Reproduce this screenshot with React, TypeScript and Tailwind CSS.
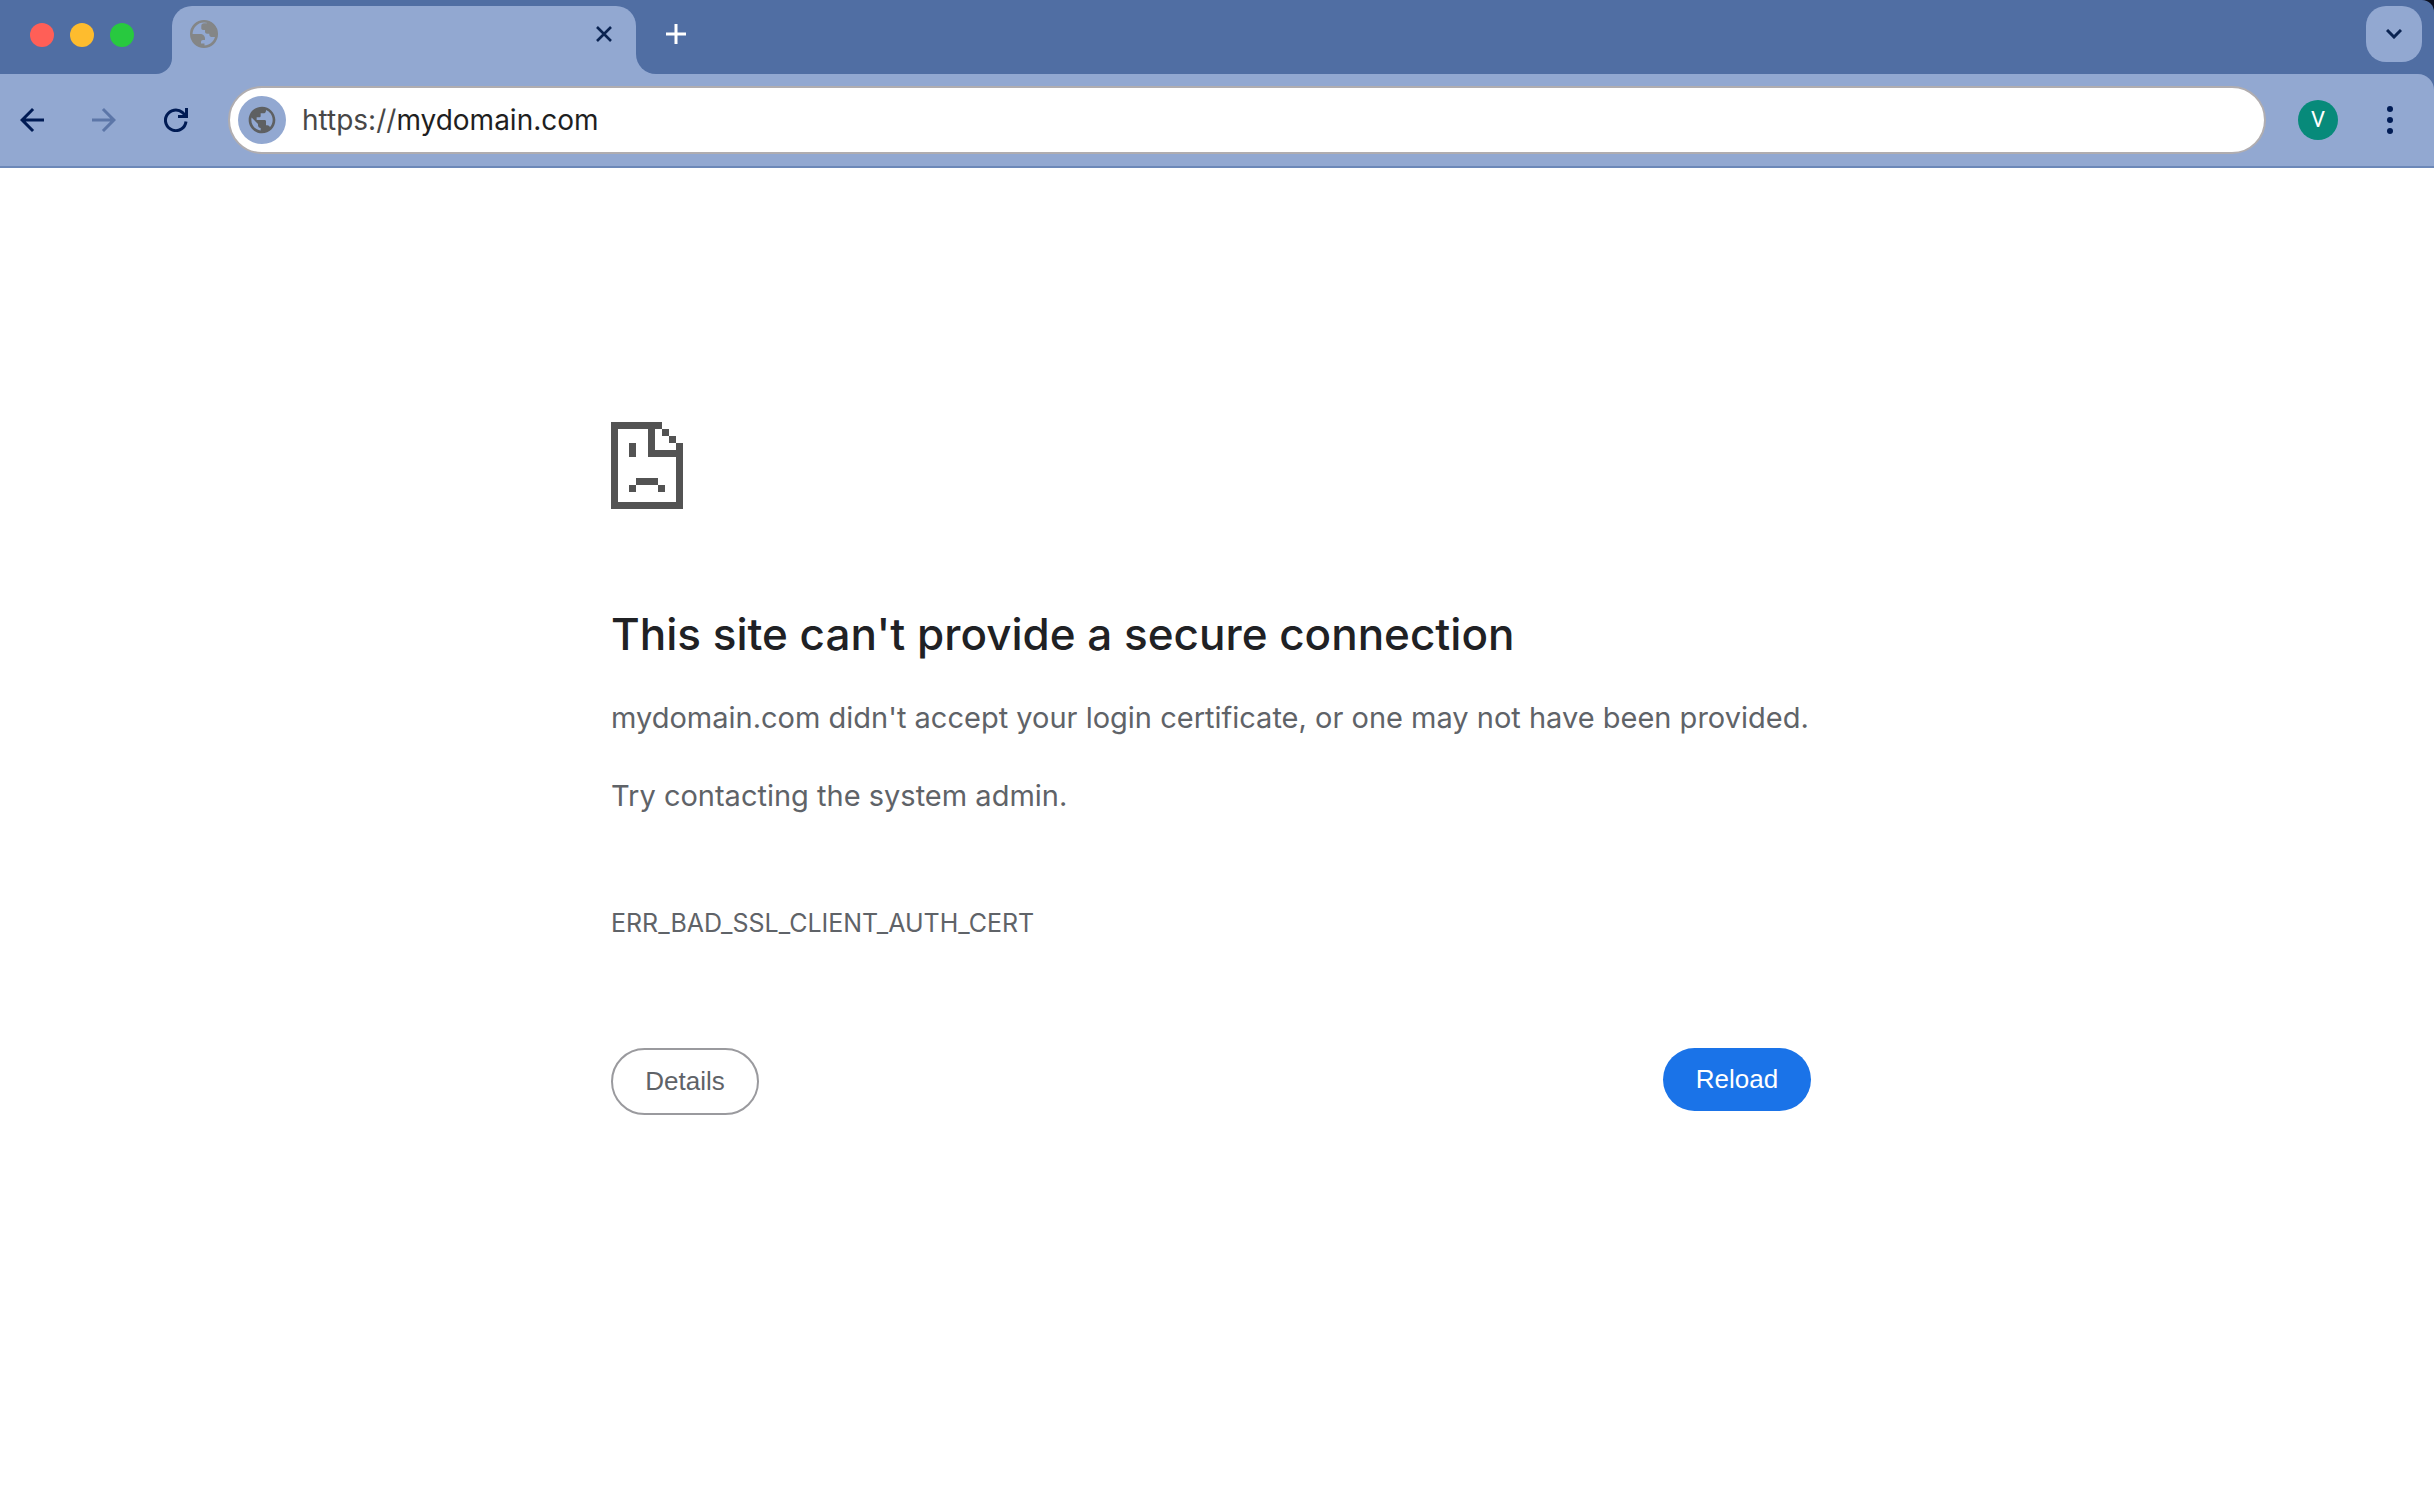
import type { ReactNode } from 'react';
import { MdArrowBack, MdArrowForward, MdPublic } from 'react-icons/md';

const trafficLights = [
  { label: 'Close window', color: 'bg-[#ff5f57]' },
  { label: 'Minimize window', color: 'bg-[#febc2e]' },
  { label: 'Zoom window', color: 'bg-[#28c93f]' },
];

interface IconButtonProps {
  label: string;
  children: ReactNode;
  className?: string;
  disabled?: boolean;
}

function IconButton({ label, children, className = '', disabled = false }: IconButtonProps) {
  return (
    <button
      type="button"
      aria-label={label}
      disabled={disabled}
      className={`flex shrink-0 items-center justify-center ${className}`}
    >
      {children}
    </button>
  );
}

// Default favicon for pages without one
function FaviconGlobe() {
  return (
    <svg viewBox="0 0 28 28" className="h-7 w-7" fill="#848687" aria-hidden="true">
      <circle cx="14" cy="14" r="12.7" fill="none" stroke="#848687" strokeWidth="2.6" />
      <path d="M1 14h9c3 0 5 2 5 4.500v1.500h-2c-1.200 0-2 .8-2 2v1.500h3.500V27C7 27 1 21 1 14z" />
      <path d="M17 1.500v1.800h-3c-1.600 0-2.700 1.100-2.700 2.600v2.300c0 1 .7 1.700 1.700 1.700h2v1.800c0 1.100.9 2 2 2h2.300v1.100c0 1.200.9 2.200 2.200 2.200H27C28.500 8 23 2 17 1.500z" />
    </svg>
  );
}

function TabStrip() {
  return (
    <div className="flex h-[74px] items-start rounded-tr-[12px] bg-[#506ea3]">
      <div className="flex h-[70px] w-[156px] shrink-0 items-center gap-4 pl-[30px]">
        {trafficLights.map((light) => (
          <button
            key={light.label}
            type="button"
            aria-label={light.label}
            className={`h-6 w-6 rounded-full ${light.color}`}
          />
        ))}
      </div>

      {/* Active tab with flared bottom corners */}
      <div className="flex items-end self-end">
        <div className="h-5 w-4 shrink-0 bg-[#92a8d1]">
          <div className="h-5 w-4 rounded-br-[20px] bg-[#506ea3]" />
        </div>
        <div className="flex h-[68px] w-[464px] items-center justify-between rounded-t-[20px] bg-[#92a8d1] pr-5 pb-3 pl-[18px]">
          <FaviconGlobe />
          <IconButton label="Close tab" className="h-6 w-6">
            <svg viewBox="0 0 16 16" className="h-4 w-4" fill="none" stroke="#0a2351" strokeWidth="2.6">
              <path d="M1 1l14 14M15 1L1 15" />
            </svg>
          </IconButton>
        </div>
        <div className="h-5 w-5 shrink-0 bg-[#92a8d1]">
          <div className="h-5 w-5 rounded-bl-[20px] bg-[#506ea3]" />
        </div>
      </div>

      <IconButton label="New tab" className="mt-[18px] ml-1 h-8 w-8">
        <svg viewBox="0 0 20 20" className="h-5 w-5" fill="none" stroke="white" strokeWidth="3">
          <path d="M10 0v20M0 10h20" />
        </svg>
      </IconButton>

      <IconButton label="Search tabs" className="mt-[6px] mr-3 ml-auto h-14 w-14 rounded-[20px] bg-[#92a8d1]">
        <svg viewBox="0 0 16 10" className="h-[10px] w-4" fill="none" stroke="#0a2351" strokeWidth="3">
          <path d="M1 1l7 7 7-7" />
        </svg>
      </IconButton>
    </div>
  );
}

function Toolbar() {
  return (
    <div className="bg-[#506ea3]">
      <div className="flex h-[94px] items-center rounded-tr-[16px] border-b-2 border-[#6c88b8] bg-[#92a8d1] pr-6">
        <nav aria-label="Navigation" className="flex items-center gap-10 pl-4">
          <IconButton label="Back" className="h-8 w-8 text-[#001b54]">
            <MdArrowBack className="h-9 w-9 shrink-0" />
          </IconButton>
          <IconButton label="Forward" className="h-8 w-8 text-[#5c76a8]" disabled>
            <MdArrowForward className="h-9 w-9 shrink-0" />
          </IconButton>
          <IconButton label="Reload page" className="h-8 w-8">
            <svg viewBox="0 0 24 24" className="h-6 w-6" fill="none" stroke="#001b54" strokeWidth="3">
              <path d="M22 13.500A10.300 10.300 0 1 1 18.500 4.500L22 8" />
              <path d="M22.500 0v8.500H14" />
            </svg>
          </IconButton>
        </nav>

        <div className="ml-9 flex h-[68px] flex-1 items-center rounded-full border-2 border-[#b0adb0] bg-white pl-2">
          <IconButton label="View site information" className="h-12 w-12 rounded-full bg-[#92a8d1]">
            <MdPublic className="h-8 w-8 text-[#5e6062]" />
          </IconButton>
          <div className="ml-4 font-['Inter',sans-serif] text-[28px] leading-9 text-[#1f1f1f]">
            <span className="text-[#474747]">https://</span>mydomain.com
          </div>
        </div>

        <button
          type="button"
          aria-label="Profile V"
          className="ml-8 h-10 w-10 rounded-full bg-[#078a7a] font-['Roboto',sans-serif] text-[22px] leading-10 text-white"
        >
          V
        </button>
        <IconButton label="Menu" className="ml-8 h-10 w-10">
          <svg viewBox="0 0 6 28" className="h-7 w-[6px]" fill="#001b54">
            <circle cx="3" cy="3" r="3" />
            <circle cx="3" cy="14" r="3" />
            <circle cx="3" cy="25" r="3" />
          </svg>
        </IconButton>
      </div>
    </div>
  );
}

function SadPageIcon() {
  return (
    <svg viewBox="0 0 72 87" className="h-[87px] w-[72px]" fill="#535353" shapeRendering="crispEdges" aria-hidden="true">
      <path d="M0 0h51v7H44v21h21v-7h7v66H0zM7 7v73h58V35H37V7z" fillRule="evenodd" />
      <path d="M51 7h7v7h-7zM58 14h7v7h-7zM18 21h7v14h-7zM25 56h22v7H25zM18 63h7v7h-7zM47 63h7v7h-7z" />
    </svg>
  );
}

export default function App() {
  return (
    <div className="min-h-screen bg-white">
      <header className="bg-[#0b1020]">
        <TabStrip />
        <Toolbar />
      </header>

      <div className="pr-3">
        <main className="mx-auto w-full max-w-[1200px] pt-[254px] font-['Inter',sans-serif] text-[#5f6368]">
          <SadPageIcon />
          <h1 className="mt-24 text-[44px] leading-[58px] font-medium text-[#202124]">
            This site can't provide a secure connection
          </h1>
          <p className="mt-8 text-[29px] leading-[46px]">
            mydomain.com didn't accept your login certificate, or one may not have been provided.
          </p>
          <p className="mt-8 text-[29px] leading-[46px]">Try contacting the system admin.</p>
          <div className="mt-[86px] text-[25px] leading-9">ERR_BAD_SSL_CLIENT_AUTH_CERT</div>

          <div className="mt-[107px] flex items-start justify-between font-['Liberation_Sans',sans-serif] text-[26px]">
            <button type="button" className="h-[67px] w-[148px] rounded-full border-2 border-[#9a9a9e] text-[#5f6368]">
              Details
            </button>
            <button type="button" className="h-[63px] w-[148px] rounded-full bg-[#1a73e8] text-white">
              Reload
            </button>
          </div>
        </main>
      </div>
    </div>
  );
}
